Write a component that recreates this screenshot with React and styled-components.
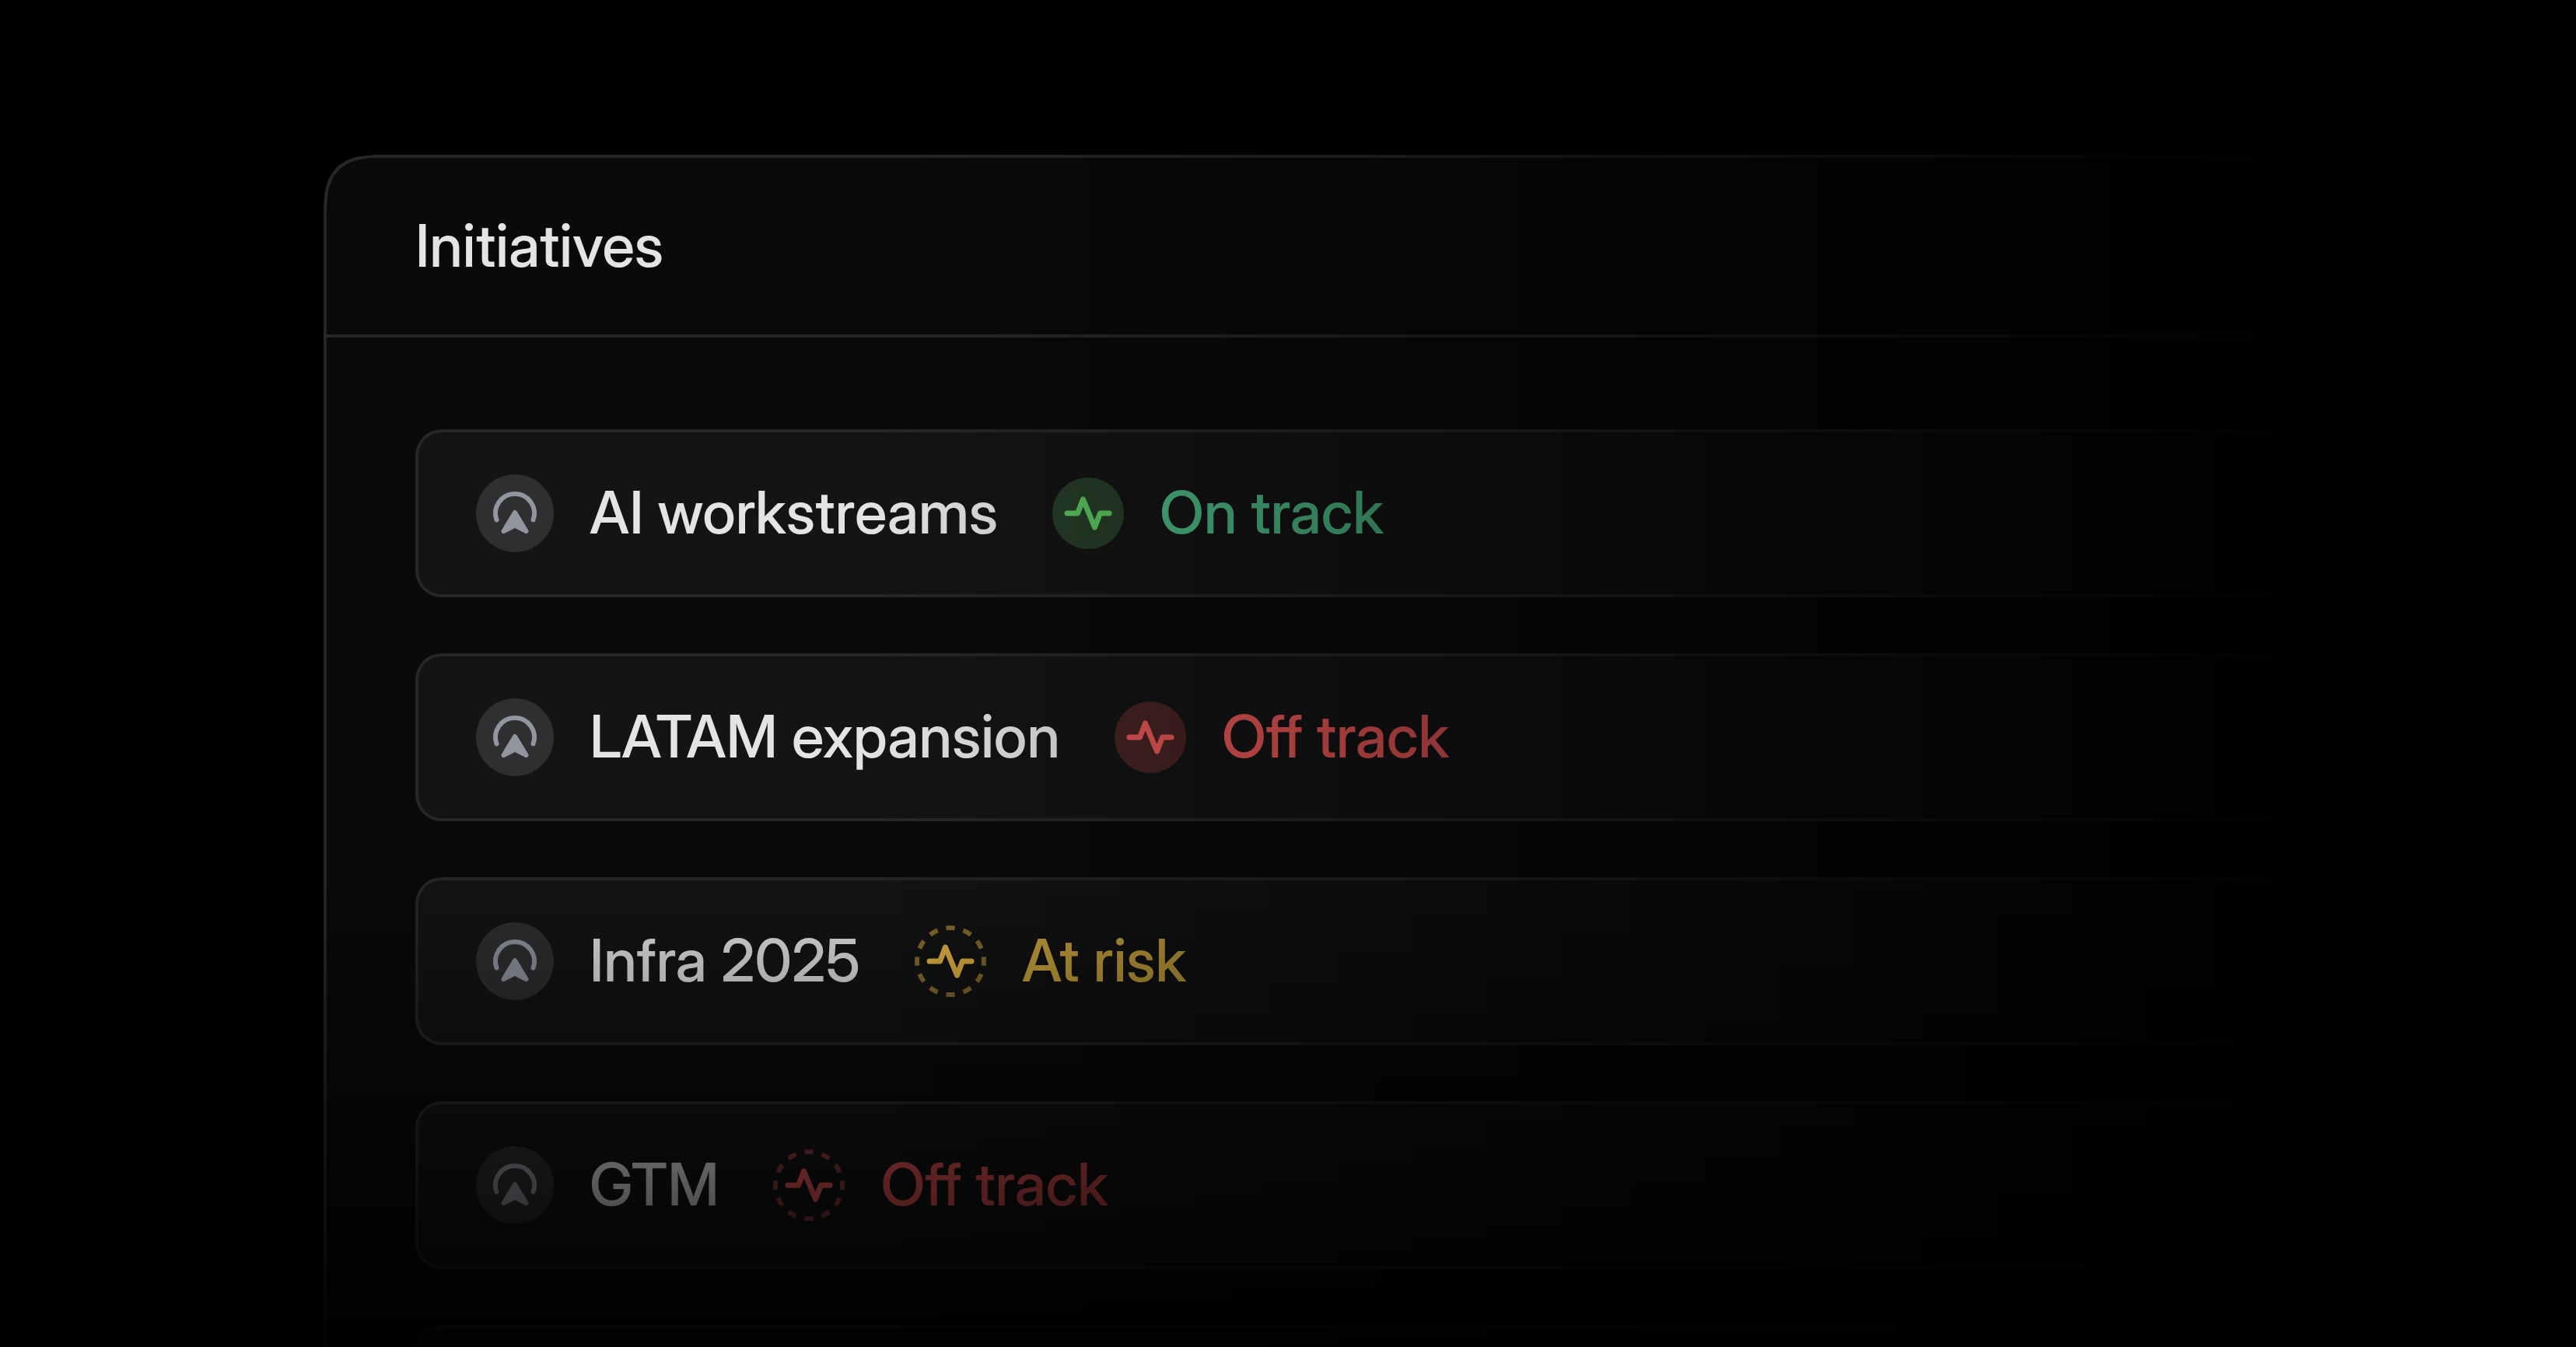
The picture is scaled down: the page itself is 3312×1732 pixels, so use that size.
import styled, { createGlobalStyle } from 'styled-components';

const GlobalStyle = createGlobalStyle`
  * {
    box-sizing: border-box;
  }

  body {
    margin: 0;
    background: #000;
    font-family: 'Inter Display', Inter, 'Liberation Sans', sans-serif;
    font-variation-settings: 'opsz' 32;
    font-variant-ligatures: none;
  }
`;

const Page = styled.main`
  height: 100vh;
  overflow: hidden;
  padding: 199px 0 0 416px;
  background: #000;
  mask-image: linear-gradient(to bottom, #000 63%, transparent 104%);
`;

const Panel = styled.section`
  min-height: 100%;
  border: 4px solid #272727;
  border-right: none;
  border-bottom: none;
  border-top-left-radius: 56px;
  background: #0a0a0a;
  mask-image: linear-gradient(to right, #000 24%, transparent 89%);

  @supports (corner-shape: superellipse(1.5)) {
    border-top-left-radius: 76px;
    corner-shape: superellipse(1.5);
  }
`;

const Header = styled.header`
  display: flex;
  align-items: center;
  height: 231px;
  padding-left: 114px;
  border-bottom: 4px solid #272727;
`;

const Title = styled.h1`
  margin: 0;
  padding-bottom: 4px;
  color: #e3e4e6;
  font-size: 76px;
  font-weight: 500;
  line-height: 96px;
`;

const List = styled.ul`
  display: flex;
  flex-direction: column;
  gap: 72px;
  margin: 0;
  padding: 118px 0 0 114px;
  list-style: none;
`;

const Card = styled.li`
  display: flex;
  align-items: center;
  gap: 70px;
  height: 216px;
  padding-left: 74px;
  border: 4px solid #272727;
  border-right: none;
  border-radius: 34px 0 0 34px;
  background: #141414;
`;

const Group = styled.div`
  display: flex;
  align-items: center;
  gap: 46px;
`;

const Name = styled.span`
  padding-bottom: 4px;
  color: #e3e4e6;
  font-size: 76px;
  font-weight: 500;
  line-height: 96px;
`;

const Status = styled(Name)`
  color: ${(props) => props.$color};
`;

const Badge = styled.svg`
  display: block;
  flex: none;
  width: 100px;
  height: 100px;
`;

const Health = styled.svg`
  display: block;
  flex: none;
  width: 92px;
  height: 92px;
`;

const STATUSES = {
  onTrack: { label: 'On track', text: '#4cb782', icon: '#5bc25f' },
  offTrack: { label: 'Off track', text: '#eb5757', icon: '#eb5757' },
  atRisk: { label: 'At risk', text: '#deb543', icon: '#f0bf4a' },
};

const initiatives = [
  { name: 'AI workstreams', status: 'onTrack' },
  { name: 'LATAM expansion', status: 'offTrack' },
  { name: 'Infra 2025', status: 'atRisk', dashed: true },
  { name: 'GTM', status: 'offTrack', dashed: true },
];

const InitiativeIcon = () => (
  <Badge viewBox="0 0 100 100" aria-hidden="true">
    <circle cx="50" cy="50" r="50" fill="#2f2f31" />
    <path d="M26.5 58.5 A25 25 0 1 1 73.5 58.5" fill="none" stroke="#90959f" strokeWidth="6" strokeLinecap="round" />
    <path
      d="M50 49 L64.5 73 L50 65.5 L35.5 73 Z"
      fill="#90959f"
      stroke="#90959f"
      strokeWidth="6"
      strokeLinejoin="round"
    />
  </Badge>
);

const HealthIcon = ({ color, dashed }) => (
  <Health viewBox="0 0 92 92" aria-hidden="true">
    {dashed ? (
      <circle
        cx="46"
        cy="46"
        r="43"
        fill="none"
        stroke={color}
        strokeOpacity="0.55"
        strokeWidth="6"
        pathLength="120"
        strokeDasharray="5 5"
        strokeDashoffset="2.5"
      />
    ) : (
      <circle cx="46" cy="46" r="46" fill={color} fillOpacity="0.24" />
    )}
    <path
      d="M19 46 H32.5 L39.5 28 L54.5 64 L61.5 46 H73"
      fill="none"
      stroke={color}
      strokeWidth="7"
      strokeLinecap="round"
      strokeLinejoin="round"
    />
  </Health>
);

const App = () => (
  <>
    <GlobalStyle />
    <Page>
      <Panel>
        <Header>
          <Title>Initiatives</Title>
        </Header>
        <List>
          {initiatives.map(({ name, status, dashed }) => (
            <Card key={name}>
              <Group>
                <InitiativeIcon />
                <Name>{name}</Name>
              </Group>
              <Group>
                <HealthIcon color={STATUSES[status].icon} dashed={dashed} />
                <Status $color={STATUSES[status].text}>{STATUSES[status].label}</Status>
              </Group>
            </Card>
          ))}
          <Card aria-hidden="true" />
        </List>
      </Panel>
    </Page>
  </>
);

export default App;
